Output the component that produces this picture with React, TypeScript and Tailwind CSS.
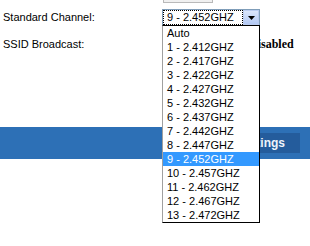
import React from "react";

const channels = [
  "Auto",
  "1 - 2.412GHZ",
  "2 - 2.417GHZ",
  "3 - 2.422GHZ",
  "4 - 2.427GHZ",
  "5 - 2.432GHZ",
  "6 - 2.437GHZ",
  "7 - 2.442GHZ",
  "8 - 2.447GHZ",
  "9 - 2.452GHZ",
  "10 - 2.457GHZ",
  "11 - 2.462GHZ",
  "12 - 2.467GHZ",
  "13 - 2.472GHZ",
];

const selected = "9 - 2.452GHZ";

export default function App() {
  return (
    <div
      className="relative w-[310px] h-[246px] overflow-hidden bg-white text-[11px] text-black"
      style={{ fontFamily: '"Liberation Sans", Arial, sans-serif' }}
    >
      {/* bottom edge of the field above */}
      <div className="ml-[163px] w-[50px] h-[3px] border-x border-b border-[#b9b9b9] bg-[#f0f0f0]" />

      {/* Standard Channel row */}
      <div className="flex items-center h-[17px] mt-[6px]">
        <div className="w-[162px] pl-[3px]">Standard Channel:</div>
        <div className="flex w-[98px] h-[17px] border border-[#7f9db9] bg-white">
          <div className="flex-1 flex items-center pl-[3px] border border-dotted border-black leading-none">
            {selected}
          </div>
          <div className="w-[16px] h-full flex items-center justify-center border border-[#b9cbf0] bg-gradient-to-b from-[#dbe6fb] to-[#b3c9f4]">
            <svg width="7" height="4" viewBox="0 0 7 4">
              <path d="M0 0 H7 L3.5 4 Z" fill="#000" />
            </svg>
          </div>
        </div>
      </div>

      {/* SSID Broadcast row */}
      <div className="flex items-center h-[16px] mt-[10px]">
        <div className="w-[249px] pl-[3px]">SSID Broadcast:</div>
        <div
          className="font-bold text-[12px]"
          style={{ fontFamily: '"Liberation Serif", "Times New Roman", serif' }}
        >
          Disabled
        </div>
      </div>

      {/* blue footer bar */}
      <div className="mt-[75px] h-[32px] bg-[#2d70b6] flex items-center justify-end pr-[10px]">
        <div className="h-[20px] px-[15px] flex items-center bg-[#245c9c] text-[#eef3fa] font-bold text-[12px]">
          Save Settings
        </div>
      </div>

      {/* open dropdown list */}
      <div className="absolute left-[162px] top-[25px] w-[98px] h-[198px] bg-white border border-black border-l-[#a0a0a0] z-10">
        {channels.map((c) => (
          <div
            key={c}
            className={
              "h-[14px] leading-[14px] pl-[4px] whitespace-nowrap " +
              (c === selected ? "bg-[#3399ff] text-white" : "")
            }
          >
            {c}
          </div>
        ))}
      </div>
    </div>
  );
}
